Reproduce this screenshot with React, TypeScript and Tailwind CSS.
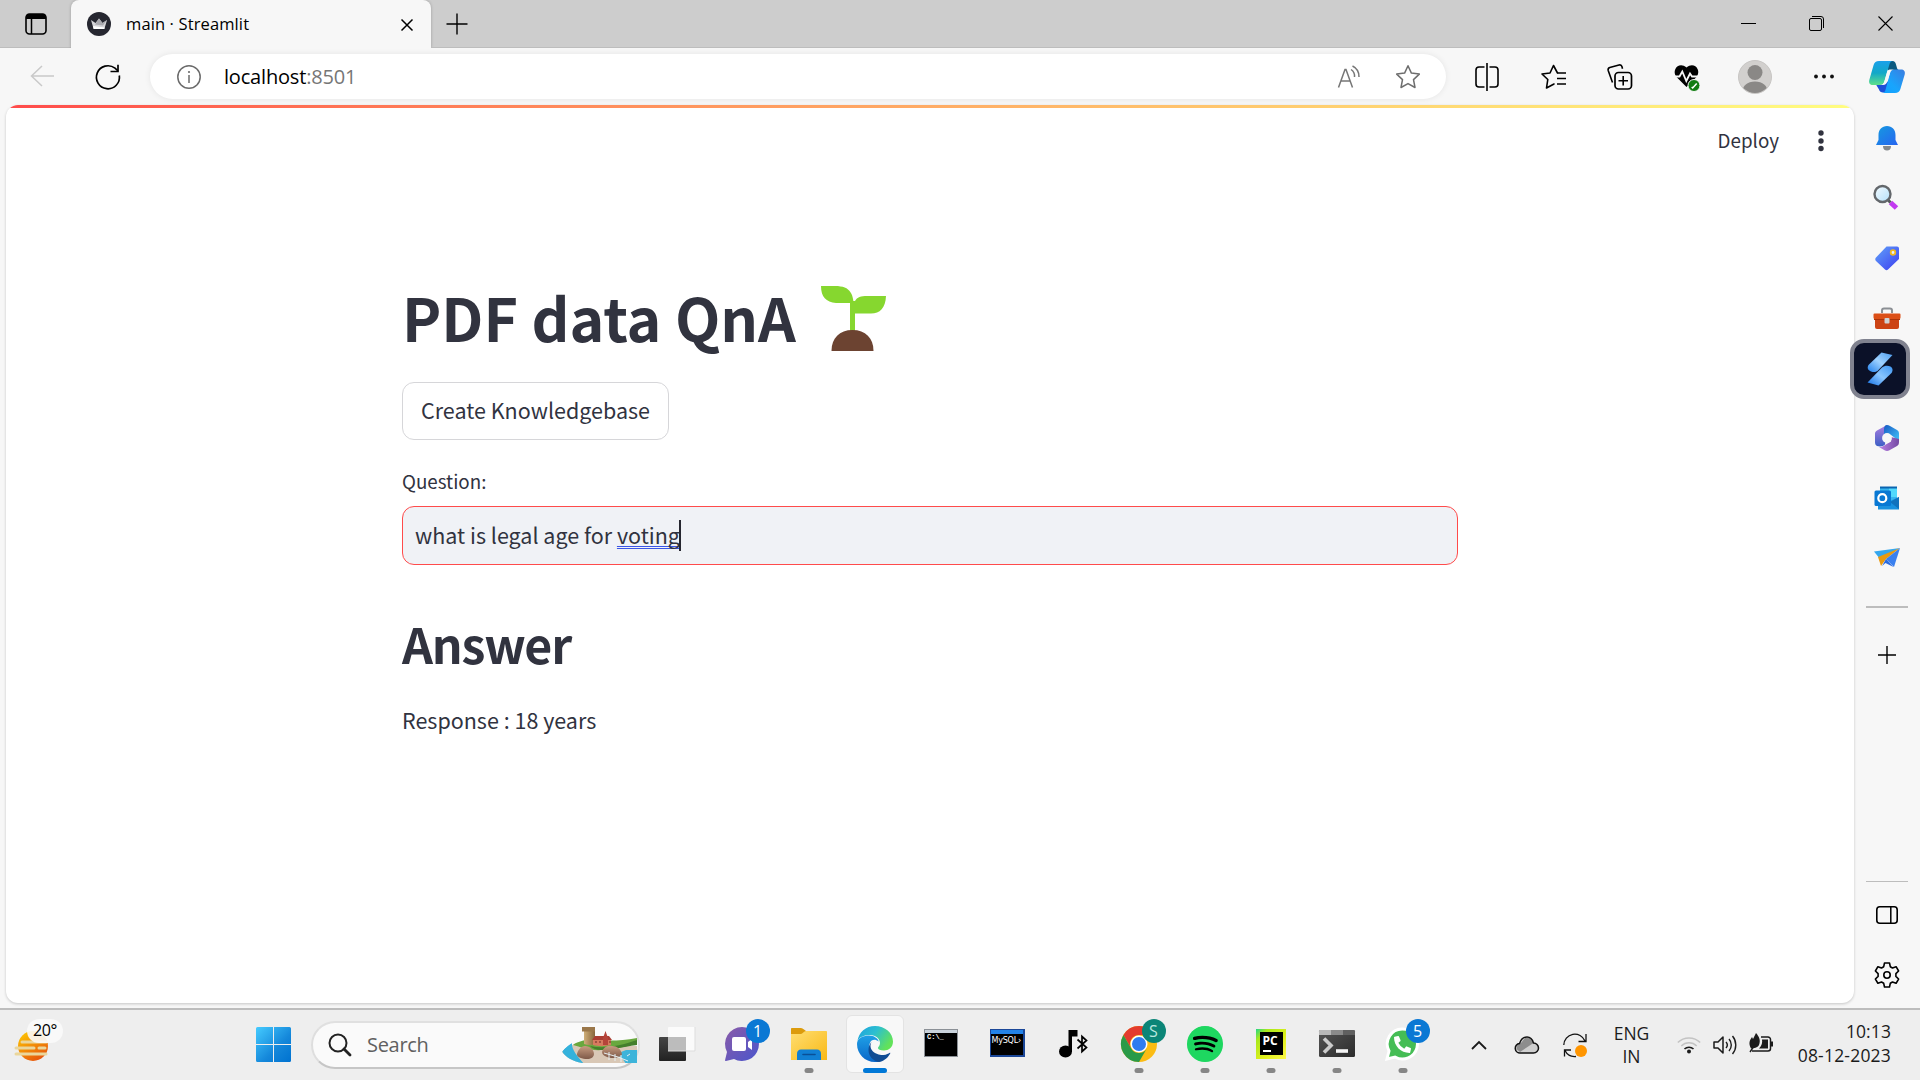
import React from "react";
import { FaSpotify, FaPhoneAlt } from "react-icons/fa";

const UI = "font-['Open_Sans','Noto_Sans',sans-serif]";
const SRC = "font-['Noto_Sans_CJK_SC',sans-serif]";

type IconProps = { w: number; h: number; children: React.ReactNode; vb?: string; className?: string };
function Icon({ w, h, children, vb, className = "" }: IconProps) {
  return (
    <svg width={w} height={h} viewBox={vb ?? `0 0 ${w} ${h}`} fill="none" className={`block shrink-0 overflow-visible ${className}`}>
      {children}
    </svg>
  );
}

function TabStrip() {
  return (
    <div className="flex h-12 shrink-0 items-stretch bg-[#cdcdcd]">
      <div className="flex w-[71px] items-center justify-center shadow-[inset_0_-1px_0_#bdbdbd]">
        <Icon w={22} h={22}>
          <rect x="1" y="1" width="20" height="20" rx="3.5" stroke="#000" strokeWidth="1.6" />
          <path d="M1 6V4a3 3 0 0 1 3-3h14a3 3 0 0 1 3 3v2z" fill="#000" />
          <path d="M6.500 6v15" stroke="#000" strokeWidth="1.5" />
        </Icon>
      </div>
      <div className="flex w-[360px] items-center rounded-t-lg bg-[#f7f7f7] pl-4 pr-[17px] shadow-[0_0_3px_rgba(0,0,0,0.25)]">
        <Icon w={24} h={24}>
          <circle cx="12" cy="12" r="12" fill="#262730" />
          <path d="M4 8l4.500 3L12 6.500l3.500 4.500L20 8l-2.500 8.500h-11z" fill="#d5d5d8" />
          <path d="M12 6.500l3.500 4.500L20 8l-4 5.500-8-1z" fill="#a9a9ae" />
          <path d="M6 14l11.700 1.500-.3 1.500H6.600z" fill="#fff" />
        </Icon>
        <span className={`${UI} ml-[15px] whitespace-nowrap text-[16.500px] leading-6 tracking-[0.12px] text-black`}>main · Streamlit</span>
        <Icon w={14} h={14} className="ml-auto mt-0.5">
          <path d="M1.500 1.500l11 11M12.500 1.500l-11 11" stroke="#000" strokeWidth="1.500" />
        </Icon>
      </div>
      <div className="flex flex-1 items-center pb-px pl-[15px] shadow-[inset_0_-1px_0_#bdbdbd]">
        <Icon w={22} h={22}>
          <path d="M11 .5v21M.5 11h21" stroke="#000" strokeWidth="1.400" />
        </Icon>
        <div className="ml-auto flex items-center">
          <div className="flex w-[68px] justify-center">
            <Icon w={15} h={15}><path d="M0 7.500h15" stroke="#000" /></Icon>
          </div>
          <div className="flex w-[68px] justify-center">
            <Icon w={15} h={15}>
              <rect x=".5" y="2.500" width="12" height="12" rx="1.500" stroke="#000" />
              <path d="M3 .5h9a2.500 2.500 0 0 1 2.500 2.500v9" stroke="#000" />
            </Icon>
          </div>
          <div className="flex w-[70px] justify-center">
            <Icon w={15} h={15}><path d="M.5.500l14 14M14.500.500l-14 14" stroke="#000" strokeWidth="1.100" /></Icon>
          </div>
        </div>
      </div>
    </div>
  );
}

function Copilot() {
  return (
    <Icon w={36} h={34}>
      <defs>
        <linearGradient id="cpA" x1="0" y1="0" x2="0" y2="1"><stop offset="0" stopColor="#1ba0ea" /><stop offset=".5" stopColor="#12a8c8" /><stop offset="1" stopColor="#5ee08a" /></linearGradient>
        <linearGradient id="cpB" x1="1" y1="0" x2="0" y2="1"><stop offset="0" stopColor="#3b7de0" /><stop offset=".6" stopColor="#18a5fd" /><stop offset="1" stopColor="#12a0ff" /></linearGradient>
      </defs>
      <path d="M18 1h5.500c2 0 3 1.500 3.500 3.500L28 8c.5 1.500 1 2 3 2h-5c-3 0-5 1-6.500 3z" fill="#0c5a80" />
      <path d="M7 24.500h8l5-4-3 12h-3c-2 0-3.500-1.200-4-3z" fill="#1d4fd8" />
      <path d="M10 1h14c-2 0-3 1.500-3.600 3.500L15.500 21c-.7 2.500-2 4-4.500 4H4C1 25-.5 23 .3 20L4.600 5C5.400 2.500 7 1 10 1z" fill="url(#cpA)" />
      <path d="M26 33H13c2 0 3-1.500 3.600-3.500L21 13c.7-2.300 2-3.500 4.500-3.500H32c3 0 4.500 2 3.700 5L31.400 29C30.600 31.500 29 33 26 33z" fill="url(#cpB)" />
      <path d="M18 12c.5-2 2-2.500 4-2.500h3.500c-2.500 0-3.800 1.200-4.500 3.500l-3 9c-.5 2-2 3-4 3h-3c2.500 0 3.800-1.500 4.500-4z" fill="#f7f7f7" />
    </Icon>
  );
}

function Toolbar() {
  const cell = "flex w-[66.5px] shrink-0 justify-center";
  return (
    <div className="flex h-[57px] shrink-0 items-center bg-[#f7f7f7]">
      <div className="flex w-[84px] justify-center pb-0.5">
        <Icon w={24} h={22}><path d="M12 1L1.500 11 12 21M1.500 11H24" stroke="#c9c9c9" strokeWidth="1.500" /></Icon>
      </div>
      <div className="flex w-[48px] justify-center">
        <Icon w={26} h={26}>
          <path d="M24.300 11.500A11.500 11.500 0 1 1 20 4.200L23 7" stroke="#000" strokeWidth="1.700" />
          <path d="M23 .8V7.500h-7.500" stroke="#000" strokeWidth="1.700" />
        </Icon>
      </div>
      <div className="ml-[18px] flex h-[45px] w-[1296px] items-center rounded-full bg-white pl-[27px] shadow-[0_0_6px_rgba(0,0,0,0.08)]">
        <Icon w={24} h={24}>
          <circle cx="12" cy="12" r="11.200" stroke="#6b6b6b" strokeWidth="1.500" />
          <path d="M12 10v8" stroke="#6b6b6b" strokeWidth="1.500" /><circle cx="12" cy="7" r="1.100" fill="#6b6b6b" />
        </Icon>
        <span className={`${UI} ml-[23px] whitespace-nowrap text-[20px] leading-7 tracking-[-0.18px] text-black`}>localhost<span className="text-[#767676]">:8501</span></span>
        <Icon w={24} h={24} className="ml-auto">
          <path d="M1.500 22.500L8 4.500h1l6.500 18M4 16h9" stroke="#767676" strokeWidth="1.500" />
          <path d="M14 4.500a8 8 0 0 1 3.500 7.500M15.500 1a12 12 0 0 1 6.500 11" stroke="#767676" strokeWidth="1.500" />
        </Icon>
        <Icon w={26} h={26} className="ml-[34px] mr-[25px]">
          <path d="M13 1.800l3.400 7.300 7.900 1-5.800 5.500 1.500 7.900-7-3.900-7 3.900 1.500-7.900-5.800-5.500 7.900-1z" stroke="#6e6e6e" strokeWidth="1.500" strokeLinejoin="round" />
        </Icon>
      </div>
      <div className={`${cell} ml-2`}>
        <Icon w={24} h={26}>
          <path d="M9.500 3H4a3 3 0 0 0-3 3v14a3 3 0 0 0 3 3h5.500M14.500 3H20a3 3 0 0 1 3 3v14a3 3 0 0 1-3 3h-5.500M12 -1v28" stroke="#000" strokeWidth="1.600" />
        </Icon>
      </div>
      <div className={cell}>
        <Icon w={26} h={26}>
          <path d="M16.500 9L12.500 1.500 9 9l-8 1 5.800 5.500L5.500 24l7.500-4" stroke="#000" strokeWidth="1.600" strokeLinejoin="round" strokeLinecap="round" />
          <path d="M16.500 9h8.500M16 14.500h9M16 20h9" stroke="#000" strokeWidth="1.600" />
        </Icon>
      </div>
      <div className={cell}>
        <Icon w={26} h={26}>
          <path d="M5.500 18.500L1.200 6.500a2.500 2.500 0 0 1 1.600-3L12 1a2.500 2.500 0 0 1 3 1.800l.5 2" stroke="#000" strokeWidth="1.600" />
          <rect x="8" y="8.500" width="16.500" height="16.500" rx="3.500" stroke="#000" strokeWidth="1.700" />
          <path d="M16.200 12v9.500M11.500 16.700H21" stroke="#000" strokeWidth="1.600" />
        </Icon>
      </div>
      <div className={cell}>
        <Icon w={26} h={28}>
          <path d="M12.500 24L2.500 14C-3 7 5-2 12.500 4.500 20-2 28 7 22.500 14z" fill="#000" />
          <path d="M0 13.500h5.500l2.800-5 4 9.500 3.700-7.500 2 3H25" stroke="#f7f7f7" strokeWidth="1.800" />
          <circle cx="20" cy="22.500" r="6" fill="#107c10" stroke="#f7f7f7" />
          <path d="M17.700 24l1 1 4-4.500" stroke="#fff" strokeWidth="1.500" />
        </Icon>
      </div>
      <div className="flex w-[70px] shrink-0 justify-center">
        <Icon w={34} h={34}>
          <clipPath id="av"><circle cx="17" cy="17" r="16" /></clipPath>
          <circle cx="17" cy="17" r="16.500" fill="#d2d0ce" stroke="#c8c6c4" />
          <g clipPath="url(#av)" fill="#8a8886"><circle cx="17" cy="12.500" r="7.500" /><path d="M4 34c0-8 5-12.500 13-12.500S30 26 30 34z" /></g>
        </Icon>
      </div>
      <div className="flex w-[67px] shrink-0 justify-center">
        <Icon w={20} h={5}><g fill="#111"><circle cx="2" cy="2.500" r="1.900" /><circle cx="10" cy="2.500" r="1.900" /><circle cx="18" cy="2.500" r="1.900" /></g></Icon>
      </div>
      <div className="ml-auto mr-[15px]"><Copilot /></div>
    </div>
  );
}

function Sprout() {
  return (
    <Icon w={66} h={66}>
      <path d="M33 50V26C33 9 30 1 14 1H0c0 11 5 16 15 17h14v30z" fill="#86d72f" />
      <path d="M29 16h5c2-4 6-5 12-5h19c-.5 12-6 17.500-15 17.500H34V48h-5z" fill="#86d72f" />
      <path d="M10.500 66c0-13 8-21 21-21s21 8 21 21z" fill="#6c4331" />
    </Icon>
  );
}

function Page() {
  return (
    <main className={`${SRC} flex h-[898px] w-[1848px] shrink-0 flex-col overflow-hidden rounded-xl bg-white text-[#31333f] shadow-[0_1px_3px_rgba(0,0,0,0.2)]`}>
      <div className="h-[3px] shrink-0 bg-gradient-to-r from-[#ff4b4b] to-[#fffd80]" />
      <div className="flex h-[66px] shrink-0 items-center justify-end">
        <span className="whitespace-nowrap pb-0.5 text-[18.800px] leading-7">Deploy</span>
        <Icon w={6} h={22} className="ml-[39px] mr-[30px]">
          <g fill="#31333f"><circle cx="3" cy="3" r="2.700" /><circle cx="3" cy="11" r="2.700" /><circle cx="3" cy="18.500" r="2.700" /></g>
        </Icon>
      </div>
      <div className="ml-[396px] mt-[104px] flex w-[1056px] flex-col items-start">
        <h1 className="flex h-20 items-center whitespace-nowrap text-[59px] font-bold leading-[80px]">
          <span className="-mt-0.5">PDF data QnA</span><span className="ml-[25px]"><Sprout /></span>
        </h1>
        <button className="mt-6 flex h-[58px] w-[267px] items-center justify-center whitespace-nowrap rounded-xl border border-[#d6d6d9] bg-white pb-0.5 text-[21.500px] leading-8">Create Knowledgebase</button>
        <label className="mt-[26px] h-[30px] whitespace-nowrap text-[18.800px] leading-[30px]">Question:</label>
        <div className="mt-[10px] flex h-[59px] w-full items-center rounded-xl border border-[#ff4b4b] bg-[#f0f2f6] pl-3 text-[21.500px] leading-8">
          <span className="whitespace-pre pb-0.5">what is legal age for </span>
          <span className="whitespace-nowrap pb-0.5 underline decoration-[#3b55e6] decoration-double decoration-1 underline-offset-2 [text-decoration-skip-ink:none]">voting</span>
          <span className="-ml-px h-[31px] w-0.5 bg-[#262730]" />
        </div>
        <h2 className="mt-[43px] h-[70px] whitespace-nowrap text-[48.300px] font-bold leading-[70px] tracking-[-1.2px]">Answer</h2>
        <p className="mt-[25px] h-[34px] whitespace-nowrap text-[21.500px] leading-[34px]">Response : 18 years</p>
      </div>
    </main>
  );
}

function Sidebar() {
  const row = "flex h-[60px] shrink-0 items-center justify-center";
  return (
    <aside className="flex flex-1 flex-col pt-[3px]">
      <div className={row}>
        <Icon w={24} h={26}>
          <defs><linearGradient id="bell" x1="0" y1="0" x2="1" y2="1"><stop offset="0" stopColor="#159be0" /><stop offset="1" stopColor="#2764f0" /></linearGradient></defs>
          <path d="M8 21h8c0 3-1.500 4.500-4 4.500S8 24 8 21z" fill="#85888c" />
          <path d="M12 1c5 0 8.500 3.500 8.500 9v5l2.500 5H1l2.500-5v-5C3.500 4.500 7 1 12 1z" fill="url(#bell)" />
        </Icon>
      </div>
      <div className={`${row} pb-0.5`}>
        <Icon w={26} h={26} className="mr-1">
          <defs><linearGradient id="lens" x1="0" y1="0" x2="1" y2="1"><stop offset="0" stopColor="#f4fbff" /><stop offset="1" stopColor="#b4e0fa" /></linearGradient></defs>
          <path d="M18.500 18.500l6 5.500" stroke="#c239f0" strokeWidth="5" />
          <path d="M15.500 15.500l3 3" stroke="#55585c" strokeWidth="3" />
          <circle cx="10.500" cy="10" r="8" fill="url(#lens)" stroke="#63676b" strokeWidth="2.400" />
        </Icon>
      </div>
      <div className={row}>
        <Icon w={26} h={26}>
          <defs><linearGradient id="tag" x1="0" y1="0" x2="1" y2="1"><stop offset="0" stopColor="#61a3f9" /><stop offset="1" stopColor="#3c3cf0" /></linearGradient></defs>
          <path d="M12.500 1.500H23a2 2 0 0 1 2 2V14L14 24.500c-1 1-2 1-3 0L2 16c-1-1-1-2.500 0-3.500z" fill="url(#tag)" />
          <circle cx="19" cy="7.500" r="2.300" fill="#e6efff" stroke="#f2b81d" strokeWidth="1.800" />
        </Icon>
      </div>
      <div className={row}>
        <Icon w={28} h={22}>
          <path d="M9 6V3.500C9 2 10 1.500 11 1.500h6c1.500 0 2 1 2 2V6" stroke="#8b8f94" strokeWidth="2" />
          <rect x="2" y="9" width="24" height="13" rx="2" fill="#cc4314" />
          <path d="M1.500 6.500h25a1 1 0 0 1 1 1v3c0 1-1 2-2 2h-23c-1 0-2-1-2-2v-3a1 1 0 0 1 1-1z" fill="#dc4f17" />
          <path d="M1 12.500h26" stroke="#a8330b" />
          <rect x="11.500" y="11" width="5" height="5.500" rx="1" fill="#cfd2d5" />
        </Icon>
      </div>
      <div className="relative z-10 -ml-1 -mt-[9px] flex size-[60px] shrink-0 items-center justify-center rounded-[14px] border-4 border-[#80828f] bg-[#0b1128]">
        <Icon w={26} h={34}>
          <defs>
            <linearGradient id="slA" x1="1" y1="0" x2="0" y2="1"><stop offset="0" stopColor="#4a9cf0" /><stop offset=".5" stopColor="#9fd2ff" /><stop offset="1" stopColor="#2180ec" /></linearGradient>
            <linearGradient id="slB" x1="1" y1="0" x2="0" y2="1"><stop offset="0" stopColor="#3c95f2" /><stop offset=".5" stopColor="#8ac6ff" /><stop offset="1" stopColor="#1470e4" /></linearGradient>
          </defs>
          <path d="M14.500.5L25.500 3 11 18.500c-1.500 1.500-4 2-7 1C0 18 0 14.500 2 12.500z" fill="url(#slA)" />
          <path d="M.5 30.500L15 15.500c2.500-2.200 6-2.200 8.500-1 2.500 1.500 2.500 4.500 1 6.500L11.500 33.500z" fill="url(#slB)" />
        </Icon>
      </div>
      <div className={`${row} mt-[9px]`}>
        <Icon w={26} h={28}>
          <defs>
            <linearGradient id="mA" x1="0" y1="0" x2="0" y2="1"><stop offset="0" stopColor="#ad7ee0" /><stop offset="1" stopColor="#3c5fc5" /></linearGradient>
            <linearGradient id="mB" x1="0" y1="0" x2="1" y2="1"><stop offset="0" stopColor="#175bc4" /><stop offset="1" stopColor="#43c5fa" /></linearGradient>
            <linearGradient id="mC" x1="0" y1="0" x2="1" y2="0"><stop offset="0" stopColor="#b980e4" /><stop offset="1" stopColor="#754aa3" /></linearGradient>
          </defs>
          <path d="M13 1L3 6.500C1.500 7.500 1 8 1 10v8c0 2 .5 3 2 4l3 .5c2 0 4-1 5-2z" fill="url(#mA)" />
          <path d="M13 1c1 0 2 .3 3 1l7 4c1.500 1 2 2 2 3.500V17l-8-6-7-1V5c0-2 1-4 3-4z" fill="url(#mB)" />
          <path d="M25 15v3c0 2-.5 3-2 4l-8 4.500c-1 .5-3 .5-4 0L5 23c3 0 4-.5 6-2l6-3.500V13z" fill="url(#mC)" />
          <circle cx="13" cy="14" r="4.900" fill="#f7f7f7" />
        </Icon>
      </div>
      <div className={row}>
        <Icon w={26} h={26}>
          <path d="M6 2h17v16H6z" fill="#37b5ef" /><path d="M15 2h8v10h-8z" fill="#52d9fc" /><path d="M6 1.500h17V3.500H6z" fill="#0a64b0" />
          <path d="M4 14l10 3 11-5v12.500H4z" fill="#1991df" /><path d="M25 12l-9 5 9 7z" fill="#1272bd" />
          <rect x=".5" y="5.500" width="16.500" height="15.500" rx="1.500" fill="#0878d3" />
          <circle cx="8.300" cy="13.200" r="4" stroke="#fff" strokeWidth="2.200" />
        </Icon>
      </div>
      <div className={row}>
        <Icon w={26} h={22} className="mr-px">
          <path d="M26 1L0 4.500l6 7.500z" fill="#35a7ee" /><path d="M26 1L4 10l3 9 5-7z" fill="#e99a10" />
          <path d="M26 1L12 12l8 8z" fill="#3a80ef" /><path d="M12 12L8 19l3.500-3 8 4z" fill="#2a6be0" />
        </Icon>
      </div>
      <div className="ml-3 mt-[18px] h-0.5 w-[42px] shrink-0 bg-[#bdbdbd]" />
      <div className="mt-[38px] flex justify-center">
        <Icon w={18} h={18} className="mr-px"><path d="M9 0v18M0 9h18" stroke="#000" strokeWidth="1.400" /></Icon>
      </div>
      <div className="ml-3 mt-[217px] h-px w-[42px] shrink-0 bg-[#bdbdbd]" />
      <div className="mt-[24px] flex justify-center">
        <Icon w={22} h={18}><rect x=".8" y=".8" width="20.400" height="16.400" rx="3" stroke="#000" strokeWidth="1.600" /><path d="M14.800 1v16" stroke="#000" strokeWidth="1.500" /></Icon>
      </div>
      <div className="mt-[38px] flex justify-center">
        <Icon w={26} h={26}>
          <path d="M10.500 1h5l.8 3.700 2.200 1.300 3.600-1.300 2.500 4.300-2.700 2.600v2.800l2.700 2.600-2.500 4.300-3.600-1.300-2.200 1.300-.8 3.700h-5l-.8-3.700L7.500 20l-3.600 1.300L1.400 17l2.700-2.600v-2.800L1.400 9l2.500-4.300L7.500 6l2.200-1.300z" stroke="#000" strokeWidth="1.600" strokeLinejoin="round" />
          <circle cx="13" cy="13" r="3.200" stroke="#000" strokeWidth="1.600" />
        </Icon>
      </div>
    </aside>
  );
}

function Badge({ children, className }: { children: string; className: string }) {
  return (
    <span className={`${UI} absolute -top-px left-[35.5px] flex size-6 items-center justify-center rounded-full text-[16px] leading-none ${className}`}>{children}</span>
  );
}

function Task({ children, dot }: { children: React.ReactNode; dot?: boolean }) {
  return (
    <div className="relative flex h-[48px] w-[66px] shrink-0 items-center justify-center">
      {children}
      {dot && <span className="absolute -bottom-[5px] left-1/2 h-[5px] w-[9px] -translate-x-1/2 rounded-full bg-[#868686]" />}
    </div>
  );
}

function Castle() {
  return (
    <Icon w={76} h={36}>
      <defs>
        <clipPath id="cs"><path d="M14 0h61v36H20C10 34 4 30 0 25c3-5 8-8 14-11z" /></clipPath>
        <linearGradient id="twr" x1="0" y1="0" x2="1" y2="0"><stop offset="0" stopColor="#cfae78" /><stop offset="1" stopColor="#86653c" /></linearGradient>
        <linearGradient id="rck" x1="0" y1="0" x2="0" y2="1"><stop offset="0" stopColor="#c79c80" /><stop offset="1" stopColor="#7f5a49" /></linearGradient>
      </defs>
      <g clipPath="url(#cs)">
        <path d="M0 24L14 16l20 3h41v18H0z" fill="#d9c8b6" />
        <path d="M0 24l10-9c-1 7 5 14 12 22H6z" fill="#35b2dc" />
        <path d="M54 27l10-4h11v14H64c-2-4-5-7-10-10z" fill="#3db4da" />
        <path d="M11 18c5-4 14-6 22-5 14 1 26 1 42-2v6c-12 2-22 6-34 6-14 1-22-3-30-5z" fill="#69a83e" />
        <path d="M28 19c14 3 30 0 47-6v5c-16 2-24 5-36 5-5 0-9-2-11-4z" fill="#447f2c" />
      </g>
      <path d="M22 4h11v13c-4 1.500-8 1-11 0z" fill="url(#twr)" /><path d="M20 0h13v4.500H20z" fill="#9a774a" />
      <path d="M31 12h18v6c-6 1.500-13 1.500-18 0z" fill="#d67a5f" /><path d="M30 13l3-4h14l3 4z" fill="#ab3d33" /><path d="M41 11l2.500-7 2.500 7v7h-5z" fill="#b5443a" />
      <path d="M34 14v2M38 14v2M48 14v2" stroke="#6d2a22" />
      <path d="M15 27c1-4 4-8 8-8 5 0 9 4 9 8 0 3-3 5-7 5s-11-2-10-5z" fill="url(#rck)" />
      <path d="M40 25c1-4 5-7 10-6 5 0 9 3 10 8 0 2-5 4-9 4s-11-2-11-6z" fill="url(#rck)" />
      <path d="M42 26l14 4 10 4M47 25v8M53 27v7M59 28v7M65 29l3-2" stroke="#e6eff2" strokeWidth="1" />
    </Icon>
  );
}

function EdgeLogo() {
  return (
    <Icon w={36} h={36}>
      <defs>
        <linearGradient id="eA" x1="0" y1="0" x2="1" y2=".5"><stop offset="0" stopColor="#1d9fe0" /><stop offset=".5" stopColor="#2cbfd0" /><stop offset="1" stopColor="#62e25a" /></linearGradient>
        <linearGradient id="eB" x1="0" y1="0" x2="0" y2="1"><stop offset="0" stopColor="#1fa0e6" /><stop offset="1" stopColor="#0a66c8" /></linearGradient>
      </defs>
      <path d="M.3 16C1.500 6 9 0 18 0c10 0 18 7 18 15.500 0 6-4.500 9-9 9-4 0-6-1.200-6-2.500s2-2 2-5c0-4-4-8-10-8C6 9 1 12 .3 16z" fill="url(#eA)" />
      <path d="M0 18C0 13 5 9.500 12 9.500c5 0 9 3 9.800 6-7-5-11 2-9 8 2 7 8 11.500 11 11.500-2 1-4 1-6 1C8 36 0 28 0 18z" fill="url(#eB)" />
      <path d="M14.500 16c-4 8 5 13.500 12 13 3-.3 5-1.500 6-2 .8-.4 1 .2.600.8C30 33 26 35.500 22 36c-6-1-10.500-6-10.500-12 0-3 1-6 3-8z" fill="#104c94" />
    </Icon>
  );
}

function Taskbar() {
  return (
    <footer className="flex h-[72px] shrink-0 items-center border-t-2 border-[#bdbdbd] bg-[#eeeeee] pb-px">
      <div className="relative ml-[15px] mt-1 h-[48px] w-[50px]">
        <Icon w={34} h={32} className="absolute left-0 top-2">
          <defs><linearGradient id="sun" x1="0" y1="0" x2=".6" y2="1"><stop offset="0" stopColor="#ffd000" /><stop offset="1" stopColor="#e8590c" /></linearGradient></defs>
          <circle cx="18" cy="15" r="15" fill="url(#sun)" />
          <path d="M7 11h24M1 17h18M24 17h6M1 23h30" stroke="#ead69b" strokeWidth="3" strokeLinecap="round" />
        </Icon>
        <span className={`${UI} absolute -top-[4px] left-3 flex h-6 w-[36px] items-center justify-center rounded-full bg-[#fafafa]/90 pb-0.5 text-[16px] leading-6 tracking-[-0.3px] text-black`}>20°</span>
      </div>
      <Icon w={35} h={35} className="ml-[191px]">
        <defs><linearGradient id="win" gradientUnits="userSpaceOnUse" x1="0" y1="0" x2="35" y2="35"><stop offset="0" stopColor="#45cbff" /><stop offset=".6" stopColor="#1487da" /><stop offset="1" stopColor="#0072d0" /></linearGradient></defs>
        <path d="M1.500 0H17v17H0V1.500Q0 0 1.500 0zM18 0h15.500Q35 0 35 1.500V17H18zM0 18h17v17H1.500Q0 35 0 33.500zM18 18h17v15.500q0 1.500-1.500 1.500H18z" fill="url(#win)" />
      </Icon>
      <div className="ml-5 flex h-[48px] w-[329px] shrink-0 items-center rounded-full border-2 border-b-[#c6c6c6] border-l-[#dedede] border-r-[#dedede] border-t-[#e0e0e0] bg-[#fafafa] pl-[15px]">
        <Icon w={24} h={24}><circle cx="10" cy="10" r="8.500" stroke="#222" strokeWidth="2" /><path d="M16 16l6 6" stroke="#222" strokeWidth="2.800" strokeLinecap="round" /></Icon>
        <span className={`${UI} ml-[15px] whitespace-nowrap text-[20px] leading-7 tracking-[-0.3px] text-[#606060]`}>Search</span>
        <div className="ml-auto"><Castle /></div>
      </div>
      <div className="ml-1 flex">
        <Task>
          <Icon w={36} h={34}>
            <defs><linearGradient id="tv" x1="0" y1="0" x2="0" y2="1"><stop offset="0" stopColor="#454545" /><stop offset="1" stopColor="#222" /></linearGradient></defs>
            <rect y="10" width="27" height="24" rx="1" fill="url(#tv)" />
            <rect x="9" width="27" height="24" rx="1" fill="#fbfbfb" /><path d="M9 10h18v14H9z" fill="#bcbcbc" />
            <path d="M9 24h27V0" stroke="#ddd" />
          </Icon>
        </Task>
        <Task>
          <Icon w={34} h={34} className="-ml-0.5">
            <defs><linearGradient id="ch" x1="0" y1="0" x2="1" y2="1"><stop offset="0" stopColor="#8a5ba8" /><stop offset="1" stopColor="#4a55cc" /></linearGradient></defs>
            <path d="M17 0a17 17 0 1 1-8 32L1 34c-1 0-1-.5-.8-1.500L2 25A17 17 0 0 1 17 0z" fill="url(#ch)" />
            <rect x="7" y="10" width="14" height="14" rx="2" fill="#fff" /><path d="M23 15l4-3v11l-4-3z" fill="#fff" />
          </Icon>
          <Badge className="bg-[#0a78d4] text-white">1</Badge>
        </Task>
        <Task dot>
          <Icon w={36} h={34}>
            <defs><linearGradient id="ex" x1="0" y1="0" x2="1" y2="1"><stop offset="0" stopColor="#ffde72" /><stop offset="1" stopColor="#f9b916" /></linearGradient></defs>
            <path d="M0 2c0-1 .5-1 1-1h9c1 0 2 .5 3 1.500L15 4h20v6H0z" fill="#dc9b0c" />
            <path d="M0 7h10c1.500 0 3-3 5-3h20c.6 0 1 .4 1 1v28H0z" fill="url(#ex)" />
            <path d="M6 33v-6c0-3 1.500-4.500 4-4.500h16c2.500 0 4 1.500 4 4.500v6z" fill="#1180d4" /><path d="M12 27.500h12" stroke="#0a4f96" strokeWidth="1.600" strokeLinecap="round" />
          </Icon>
        </Task>
        <div className="relative mx-[4px] -my-1 flex h-[58px] w-[58px] -translate-y-px items-center justify-center rounded-md border border-[#e3e3e3] bg-[#f8f8f8]">
          <EdgeLogo />
          <span className="absolute -bottom-px left-1/2 h-[5px] w-6 -translate-x-1/2 rounded-full bg-[#0078d7]" />
        </div>
        <Task>
          <div className="-mt-0.5 flex h-7 w-[34px] flex-col border border-[#8b9096] bg-black">
            <div className="h-[3px] bg-[#c9d2db]" />
            <span className="pl-0.5 font-['Liberation_Mono',monospace] text-[7px] font-bold leading-[9px] text-white">C:\_</span>
          </div>
        </Task>
        <Task>
          <div className="-mt-0.5 flex h-7 w-[35px] flex-col overflow-hidden border border-b-2 border-r-2 border-[#1b4798] bg-black">
            <div className="h-1 shrink-0 bg-[#2383e8]" />
            <span className="whitespace-nowrap pl-px pt-0.5 font-['DejaVu_Sans',sans-serif] text-[8px] leading-[10px] tracking-[-0.2px] text-white">MySQL›</span>
          </div>
        </Task>
        <Task>
          <Icon w={28} h={28}>
            <ellipse cx="6.500" cy="21.500" rx="6.500" ry="6" fill="#000" /><path d="M9.500 0H18.500v6.500H13V22H9.500z" fill="#000" />
            <path d="M18.500 9.500l9 8-4.500 4V6.500l4.500 4-9 8" stroke="#000" strokeWidth="1.700" />
          </Icon>
        </Task>
        <Task dot>
          <Icon w={36} h={36}>
            <circle cx="18" cy="18" r="18" fill="#fbbc14" />
            <path d="M2.400 9A18 18 0 0 1 33.600 9H18a9 9 0 0 0-7.800 13.500z" fill="#e33b2e" />
            <path d="M2.400 9A18 18 0 0 0 18 36l7.800-13.500A9 9 0 0 1 10.200 22.500z" fill="#2a9a48" />
            <circle cx="18" cy="18" r="8.500" fill="#fff" /><circle cx="18" cy="18" r="7" fill="#2f7cf0" />
          </Icon>
          <Badge className="bg-[#0b8577] text-[#b9e6df]">S</Badge>
        </Task>
        <Task dot>
          <div className="flex size-9 items-center justify-center rounded-full bg-[radial-gradient(#000_60%,#1ed760_62%)]"><FaSpotify size={36} color="#1ed760" /></div>
        </Task>
        <Task dot>
          <div className="flex size-[30px] items-center justify-center bg-[linear-gradient(135deg,#21d789_0%,#a8e81c_20%,#e0f01c_60%,#fcf84a_100%)]">
            <div className="flex size-[23px] flex-col bg-black pl-[3px] pt-[2px]">
              <span className="font-['Open_Sans',sans-serif] text-[12px] font-bold leading-[13px] text-white">PC</span>
              <div className="mt-[3px] h-[1.5px] w-2 bg-white" />
            </div>
          </div>
        </Task>
        <Task dot>
          <Icon w={36} h={27}>
            <defs><linearGradient id="tm" x1="0" y1="0" x2="1" y2="1"><stop offset="0" stopColor="#555" /><stop offset="1" stopColor="#2c2c2c" /></linearGradient></defs>
            <rect width="36" height="27" rx="1.500" fill="url(#tm)" /><path d="M1 0h11v5H0V1z" fill="#b8b8b8" /><path d="M12 0h12v5H12z" fill="#8a8a8a" /><path d="M24 0h11l1 1v4H24z" fill="#606060" />
            <path d="M5 8.500l7 7-7 7" stroke="#ccc" strokeWidth="3.600" /><path d="M17 21h12" stroke="#f5f5f5" strokeWidth="3.600" />
          </Icon>
        </Task>
        <Task dot>
          <Icon w={36} h={36}>
            <path d="M17.500 3a15 15 0 1 1-7.500 28L2 33l2-8A15 15 0 0 1 17.500 3z" fill="#45bd55" stroke="#fff" strokeWidth="3" />
          </Icon>
          <span className="absolute left-[24px] top-[16px]"><FaPhoneAlt size={17} color="#fff" /></span>
          <Badge className="bg-[#0a78d4] text-white">5</Badge>
        </Task>
      </div>
      <div className="ml-auto flex items-center">
        <Icon w={16} h={10}><path d="M1 9l7-7 7 7" stroke="#1a1a1a" strokeWidth="1.800" /></Icon>
        <Icon w={24} h={18} className="ml-[28px]">
          <path d="M5.500 17A4.700 4.700 0 0 1 4.500 7.600C6 3 10 1 13 1.500c3.500.5 5 3 5.500 5.500A5 5 0 0 1 18.500 17z" fill="#cfcfcf" />
          <path d="M5 16l-3.500-3 1-4L6 7l4-5h5l3.500 5z" fill="#8d8d8d" />
          <path d="M5.500 17A4.700 4.700 0 0 1 4.500 7.600C6 3 9 1 12 1c3.500 0 5.500 2.500 6.500 6A5 5 0 0 1 18.500 17z" stroke="#111" strokeWidth="1.500" />
        </Icon>
        <Icon w={24} h={24} className="ml-6">
          <path d="M.8 12A11 11 0 0 1 22 8M23 1v7.500h-7.500M1.500 23.500V17H8M2 17.500a11 11 0 0 0 11 6" stroke="#111" strokeWidth="1.300" />
          <circle cx="18" cy="18" r="6" fill="#ff9500" />
        </Icon>
        <div className={`${UI} ml-[24px] flex w-[41px] flex-col items-center text-[17.500px] leading-[23px] tracking-[-0.1px] text-[#1b1b1b]`}><span>ENG</span><span>IN</span></div>
        <Icon w={24} h={18} className="ml-[25px]">
          <path d="M.8 6.500a16 16 0 0 1 22.400 0M4.300 10a11 11 0 0 1 15.400 0" stroke="#c3c3c3" strokeWidth="1.500" />
          <path d="M7.500 13a6.500 6.500 0 0 1 9 0" stroke="#1b1b1b" strokeWidth="1.600" /><circle cx="12" cy="15.500" r="2" fill="#1b1b1b" />
        </Icon>
        <Icon w={24} h={20} className="ml-3">
          <path d="M1 7h4l5-5v16l-5-5H1z" stroke="#1b1b1b" strokeWidth="1.500" strokeLinejoin="round" />
          <path d="M13 7a4.500 4.500 0 0 1 0 6M16 4a9 9 0 0 1 0 12M19.500 1a14 14 0 0 1 0 18" stroke="#1b1b1b" strokeWidth="1.400" />
        </Icon>
        <Icon w={24} h={20} className="-mt-1 ml-3">
          <path d="M12 4h7a2.500 2.500 0 0 1 2.500 2.500v9a2.500 2.500 0 0 1-2.500 2.500H3" stroke="#1b1b1b" strokeWidth="1.500" />
          <path d="M13 6.500h6v9h-9c3-3 3.500-6 3-9zM22 8.500h2v5h-2z" fill="#1b1b1b" />
          <path d="M7 0c3 3.500 5 7 3 12-1.500 3-5 3-8 3.500C-1 10 1 7 3 4l1 2z" fill="#1b1b1b" /><path d="M1 19L7 10" stroke="#1b1b1b" strokeWidth="1.400" />
        </Icon>
        <div className={`${UI} mb-1 ml-[24px] mr-[29px] flex w-[94px] flex-col items-end whitespace-nowrap text-[17.500px] leading-[24px] text-[#1b1b1b]`}><span className="tracking-[0.1px]">10:13</span><span className="tracking-[0.2px]">08-12-2023</span></div>
      </div>
    </footer>
  );
}

export default function App() {
  return (
    <div className="flex h-[1080px] w-[1920px] flex-col overflow-hidden bg-[#f7f7f7]">
      <TabStrip />
      <Toolbar />
      <div className="flex h-[903px] shrink-0 pl-1.5">
        <Page />
        <Sidebar />
      </div>
      <Taskbar />
    </div>
  );
}
